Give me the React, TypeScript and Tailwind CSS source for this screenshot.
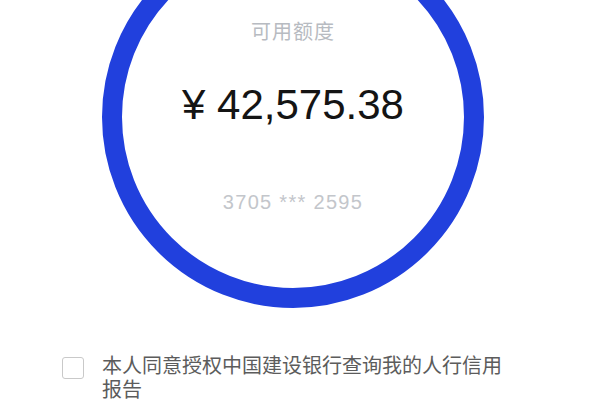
import { useState } from 'react';

const App = () => {
  const [agreed, setAgreed] = useState(false);

  return (
    <div className="w-[600px] h-[400px] overflow-hidden bg-white flex flex-col" style={{ fontFamily: '"Liberation Sans", "Noto Sans CJK SC", sans-serif' }}>
      <div className="ml-[102px] mt-[-74px] w-[382px] h-[382px] shrink-0 rounded-full border-[20px] border-[#2140dd] flex flex-col items-center pt-[71px]">
        <p className="text-[20px] leading-[28px] tracking-[1px] text-[#b7bbc1]" style={{ fontFamily: '"Noto Sans CJK SC", sans-serif' }}>
          可用额度
        </p>
        <p className="mt-[36px] text-[42px] leading-[48px] text-[#141414]">¥ 42,575.38</p>
        <p className="mt-[61px] text-[20px] leading-[24px] tracking-[1.3px] text-[#c3c6cb]">3705 *** 2595</p>
      </div>

      <div className="mt-[45px] pl-[62px] flex items-start gap-[18px]">
        <button
          onClick={() => setAgreed(!agreed)}
          className={`mt-[4px] w-[22px] h-[22px] shrink-0 rounded-[3px] border border-[#c9c9c9] ${agreed ? 'bg-[#2140dd]' : 'bg-white'}`}
        />
        <p
          className="w-[410px] text-[20px] leading-[24px] text-[#5c5c5c]"
          style={{ fontFamily: '"Noto Sans CJK SC", sans-serif' }}
        >
          本人同意授权中国建设银行查询我的人行信用报告
        </p>
      </div>
    </div>
  );
};

export default App;
